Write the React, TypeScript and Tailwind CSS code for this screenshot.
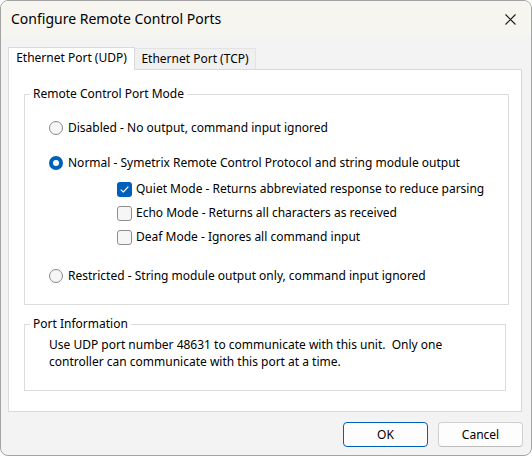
import { useState } from "react"

const font = { fontFamily: '"Noto Sans", "Open Sans", sans-serif' }

function Radio({ checked, label, onClick }: { checked: boolean; label: string; onClick: () => void }) {
  return (
    <div className="flex items-center h-[16px] cursor-default whitespace-nowrap" onClick={onClick}>
      {checked ? (
        <span className="w-[14px] h-[14px] rounded-full bg-[#005fb8] flex items-center justify-center shrink-0">
          <span className="w-[6px] h-[6px] rounded-full bg-white" />
        </span>
      ) : (
        <span className="w-[14px] h-[14px] rounded-full border border-[#8a8a8a] bg-[#f6f6f6] shrink-0" />
      )}
      <span className="ml-[5px]">{label}</span>
    </div>
  )
}

function Check({ checked, label, onClick }: { checked: boolean; label: string; onClick: () => void }) {
  return (
    <div className="flex items-center h-[16px] cursor-default whitespace-nowrap" onClick={onClick}>
      {checked ? (
        <span className="w-[15px] h-[15px] rounded-[3px] bg-[#005fb8] flex items-center justify-center shrink-0">
          <svg width="11" height="11" viewBox="0 0 11 11" fill="none">
            <path d="M2 5.8 L4.3 8 L9 3" stroke="white" strokeWidth="1.1" strokeLinecap="round" strokeLinejoin="round" />
          </svg>
        </span>
      ) : (
        <span className="w-[15px] h-[15px] rounded-[3px] border border-[#8d8d8d] bg-[#f6f6f6] shrink-0" />
      )}
      <span className="ml-[4px]">{label}</span>
    </div>
  )
}

export default function App() {
  const [mode, setMode] = useState("normal")
  const [quiet, setQuiet] = useState(true)
  const [echo, setEcho] = useState(false)
  const [deaf, setDeaf] = useState(false)
  const [tab, setTab] = useState("udp")

  return (
    <div
      className="w-[532px] h-[456px] bg-[#f3f3f3] border border-[#a3a3a3] rounded-[8px] overflow-hidden flex flex-col text-[12px] text-black"
      style={font}
    >
      {/* title bar */}
      <div className="h-[36px] bg-[#f6f5f0] flex items-center justify-between pl-[10px] pr-[15px] shrink-0">
        <span className="text-[14px] leading-none">Configure Remote Control Ports</span>
        <svg width="11" height="11" viewBox="0 0 11 11">
          <path d="M0.5 0.5 L10.5 10.5 M10.5 0.5 L0.5 10.5" stroke="#1a1a1a" strokeWidth="1.1" />
        </svg>
      </div>

      {/* tabs */}
      <div className="flex items-end h-[23px] mt-[9px] ml-[7px]">
        <div
          className={
            tab === "udp"
              ? "h-[23px] w-[127px] bg-white border border-b-0 border-[#d9d9d9] flex items-center justify-center relative z-10 -mb-px pb-[2px]"
              : "h-[21px] w-[121px] bg-[#f0f0f0] border border-b-0 border-[#e3e3e3] flex items-center justify-center"
          }
          onClick={() => setTab("udp")}
        >
          Ethernet Port (UDP)
        </div>
        <div
          className={
            tab === "tcp"
              ? "h-[23px] w-[127px] bg-white border border-b-0 border-[#d9d9d9] flex items-center justify-center relative z-10 -mb-px pb-[2px]"
              : "h-[21px] w-[121px] bg-[#f0f0f0] border border-b-0 border-l-0 border-[#e3e3e3] flex items-center justify-center"
          }
          onClick={() => setTab("tcp")}
        >
          Ethernet Port (TCP)
        </div>
      </div>

      {/* panel */}
      <div className="ml-[7px] mr-[9px] h-[343px] bg-white border border-[#d9d9d9] px-[15px] pt-[16px]">
        <fieldset className="border border-[#dcdcdc] h-[219px] px-[24px]">
          <legend className="ml-[-19px] px-[3px] h-[16px] leading-[16px]">Remote Control Port Mode</legend>
          <div className="mt-[18px]">
            <Radio checked={mode === "disabled"} label="Disabled - No output, command input ignored" onClick={() => setMode("disabled")} />
          </div>
          <div className="mt-[19px]">
            <Radio
              checked={mode === "normal"}
              label="Normal - Symetrix Remote Control Protocol and string module output"
              onClick={() => setMode("normal")}
            />
          </div>
          <div className="ml-[68px] mt-[10px] flex flex-col gap-[8px]">
            <Check checked={quiet} label="Quiet Mode - Returns abbreviated response to reduce parsing" onClick={() => setQuiet(!quiet)} />
            <Check checked={echo} label="Echo Mode - Returns all characters as received" onClick={() => setEcho(!echo)} />
            <Check checked={deaf} label="Deaf Mode - Ignores all command input" onClick={() => setDeaf(!deaf)} />
          </div>
          <div className="mt-[23px]">
            <Radio
              checked={mode === "restricted"}
              label="Restricted - String module output only, command input ignored"
              onClick={() => setMode("restricted")}
            />
          </div>
        </fieldset>

        <fieldset className="border border-[#dcdcdc] h-[75px] mt-[11px] px-[24px]">
          <legend className="ml-[-19px] px-[3px] h-[16px] leading-[16px]">Port Information</legend>
          <p className="mt-[4px] leading-[17px]">
            Use UDP port number 48631 to communicate with this unit.&nbsp; Only one
            <br />
            controller can communicate with this port at a time.
          </p>
        </fieldset>
      </div>

      {/* buttons */}
      <div className="flex justify-end gap-[10px] mt-[10px] mr-[8px]">
        <button className="w-[85px] h-[25px] rounded-[4px] bg-[#fdfdfd] border border-[#005fb8]">OK</button>
        <button className="w-[85px] h-[25px] rounded-[4px] bg-[#fdfdfd] border border-[#d0d0d0] border-b-[#bdbdbd]">Cancel</button>
      </div>
    </div>
  )
}
